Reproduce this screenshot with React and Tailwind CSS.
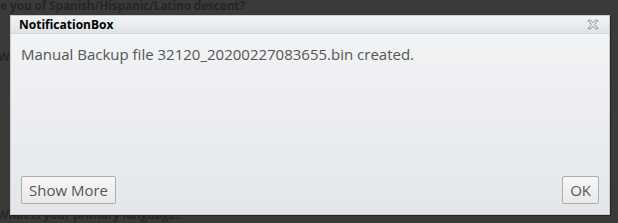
const CloseIcon = () => (
  <svg width="12" height="11" viewBox="0 0 12 11">
    <path
      d="M1 1.5 L3.5 1 L6 3.8 L8.5 1 L11 1.5 L7.6 5.5 L11 9.5 L8.5 10 L6 7.2 L3.5 10 L1 9.5 L4.4 5.5 Z"
      fill="#e9ebed"
      stroke="#8f9396"
      strokeWidth="1"
      strokeLinejoin="round"
    />
  </svg>
);

const NotificationBox = () => {
  return (
    <div className="relative h-[223px] w-[618px] overflow-hidden bg-[#3a3a39] font-['Open_Sans',sans-serif]">
      {/* page behind the overlay */}
      <div className="absolute inset-0 text-[12px] font-bold tracking-[-0.2px] text-[#262626]">
        <p className="absolute left-[-5px] top-[-3px] whitespace-nowrap">re you of Spanish/Hispanic/Latino descent?</p>
        <p className="absolute left-[-2px] top-[48px]">Wh</p>
        <p className="absolute left-[-3px] top-[206px] whitespace-nowrap">What is your primary language?</p>
      </div>

      <div className="absolute left-[10px] top-[15px] flex h-[200px] w-[600px] flex-col border border-[#c9cdd2] bg-gradient-to-b from-[#f3f4f6] to-[#e4e7ea] shadow-[1px_1px_0_#222]">
        {/* Header */}
        <div className="flex h-[18px] items-center justify-between border-b border-[#d6d9dc] bg-gradient-to-b from-[#f2f3f4] to-[#e0e3e6] pl-[8px] pr-[10px]">
          <h2 className="text-[12px] font-bold leading-none text-black">NotificationBox</h2>
          <CloseIcon />
        </div>

        {/* Body */}
        <div className="flex-1 px-[10px] pt-[10px]">
          <p className="text-[15px] leading-[20px] text-[#555]">
            Manual Backup file 32120_20200227083655.bin created.
          </p>
        </div>

        {/* Footer */}
        <div className="flex justify-between px-[10px] pb-[10px]">
          <button className="h-[28px] rounded-[2px] border border-[#adadad] bg-gradient-to-b from-[#f7f7f7] to-[#e9e9e9] px-[7px] text-[15px] text-[#555]">
            Show More
          </button>
          <button className="h-[28px] rounded-[2px] border border-[#adadad] bg-gradient-to-b from-[#f7f7f7] to-[#e9e9e9] px-[7px] text-[15px] text-[#555]">
            OK
          </button>
        </div>
      </div>
    </div>
  );
};

export default function App() {
  return <NotificationBox />;
}
